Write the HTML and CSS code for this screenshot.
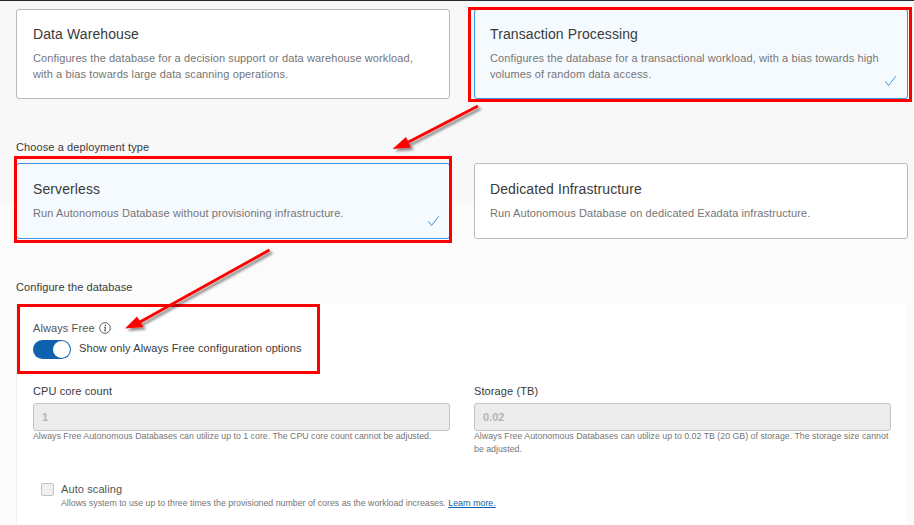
FILE: index.html
```html
<!DOCTYPE html>
<html lang="en">
<head>
<meta charset="utf-8">
<title>Create Autonomous Database</title>
<link rel="stylesheet" href="styles.css">
</head>
<body>
<main class="page">
  <div class="cards cards-top">
    <div class="card">
      <h3 class="card-title">Data Warehouse</h3>
      <p class="card-text">Configures the database for a decision support or data warehouse workload, with a bias towards large data scanning operations.</p>
    </div>
    <div class="card selected">
      <h3 class="card-title">Transaction Processing</h3>
      <p class="card-text">Configures the database for a transactional workload, with a bias towards high volumes of random data access.</p>
      <svg class="check" viewBox="0 0 11 10" width="11" height="10"><path d="M0.3 5.200 L3.600 9.400 L10.700 0.300" fill="none" stroke="#3d94e0" stroke-width="1"/></svg>
    </div>
  </div>

  <h2 class="section-label label-deploy">Choose a deployment type</h2>
  <div class="cards cards-deploy">
    <div class="card selected">
      <h3 class="card-title">Serverless</h3>
      <p class="card-text">Run Autonomous Database without provisioning infrastructure.</p>
      <svg class="check" viewBox="0 0 11 10" width="11" height="10"><path d="M0.3 5.200 L3.600 9.400 L10.700 0.300" fill="none" stroke="#3d94e0" stroke-width="1"/></svg>
    </div>
    <div class="card">
      <h3 class="card-title">Dedicated Infrastructure</h3>
      <p class="card-text">Run Autonomous Database on dedicated Exadata infrastructure.</p>
    </div>
  </div>

  <h2 class="section-label label-config">Configure the database</h2>
  <section class="panel">
    <div class="free-label">
      <span>Always Free</span>
      <svg class="info" viewBox="0 0 12 12" width="12" height="12"><circle cx="6" cy="6" r="5.300" fill="none" stroke="#555" stroke-width="0.9"/><circle cx="6.400" cy="3.400" r="0.7" fill="#444"/><path d="M5.200 5.300 H6.500 L5.700 8.800 H6.900" fill="none" stroke="#444" stroke-width="1"/></svg>
    </div>
    <div class="free-toggle">
      <span class="switch"><span class="knob"></span></span>
      <span class="switch-text">Show only Always Free configuration options</span>
    </div>
    <div class="fields">
      <div class="field">
        <label class="field-label">CPU core count</label>
        <div class="input">1</div>
        <p class="hint">Always Free Autonomous Databases can utilize up to 1 core. The CPU core count cannot be adjusted.</p>
      </div>
      <div class="field">
        <label class="field-label">Storage (TB)</label>
        <div class="input">0.02</div>
        <p class="hint">Always Free Autonomous Databases can utilize up to 0.02 TB (20 GB) of storage. The storage size cannot be adjusted.</p>
      </div>
    </div>
    <div class="autoscale">
      <span class="checkbox"></span>
      <div>
        <div class="auto-title">Auto scaling</div>
        <p class="auto-hint">Allows system to use up to three times the provisioned number of cores as the workload increases. <a href="#">Learn more.</a></p>
      </div>
    </div>
  </section>
</main>

<div class="redbox box-tp"></div>
<div class="redbox box-sl"></div>
<div class="redbox box-af"></div>

<svg class="arrows" width="914" height="525" viewBox="0 0 914 525">
  <defs>
    <filter id="shadow" x="-20%" y="-20%" width="140%" height="140%">
      <feDropShadow dx="2.500" dy="2.500" stdDeviation="1" flood-color="#000" flood-opacity="0.45"/>
    </filter>
  </defs>
  <g filter="url(#shadow)">
    <path class="arrow-shaft" d="M478 106 L408.500 142"/>
    <path class="arrow-head" d="M392.500 149 L406 137 L411 147.500 Z"/>
    <path class="arrow-shaft" d="M269.500 250 L140 322"/>
    <path class="arrow-head" d="M125 328.500 L137 316.500 L143.500 327 Z"/>
  </g>
</svg>
</body>
</html>
```

FILE: styles.css
```css
* { box-sizing: border-box; }
html, body { margin: 0; padding: 0; }
body {
  width: 914px;
  height: 525px;
  overflow: hidden;
  position: relative;
  background: #f9f9f9;
  font-family: "Liberation Sans", Arial, sans-serif;
  color: #333;
}
.page {
  height: 525px;
  border-top: 1px solid #252b33;
  padding: 8px 6px 0 16px;
  overflow: hidden;
  background: linear-gradient(#f8f8f8 202px, #fbfbfb 202px);
}
.cards {
  display: grid;
  grid-template-columns: 434px 434px;
  column-gap: 24px;
}
.cards-top { height: 90px; }
.cards-deploy { height: 76px; }
.cards-top .card { padding-top: 15px; }
.card {
  position: relative;
  background: #fff;
  border: 1px solid #b9b9bd;
  border-radius: 3px;
  padding: 16px 16px 0;
}
.card:nth-child(2) { padding-left: 15px; }
.card.selected {
  background: #f5faff;
  border-color: #3f92e2;
}
.card-title {
  margin: 0;
  font-size: 14px;
  line-height: 18px;
  font-weight: 400;
  color: #3a3a3a;
  letter-spacing: 0.1px;
}
.card-text {
  margin: 7px 0 0;
  font-size: 11px;
  line-height: 16px;
  color: #757575;
  letter-spacing: 0.1px;
}
.check {
  position: absolute;
  right: 11px;
  bottom: 12px;
}
.cards-deploy .check { right: 10px; }
.section-label {
  margin: 0;
  font-size: 11px;
  font-weight: 400;
  line-height: 14px;
  color: #3a3a3a;
  letter-spacing: 0.1px;
}
.label-deploy { margin-top: 41px; margin-bottom: 9px; }
.label-config { margin-top: 41px; margin-bottom: 10px; }
.panel {
  width: 891px;
  height: 240px;
  background: #fff;
  border-left: 1px solid #f3f3f3;
  padding: 16px 16px 0 16px;
}
.free-label {
  display: flex;
  align-items: center;
  gap: 4px;
  font-size: 11px;
  line-height: 16px;
  color: #555;
  letter-spacing: 0.1px;
}
.free-toggle {
  display: flex;
  align-items: center;
  gap: 8px;
  margin-top: 3px;
  height: 20px;
}
.switch {
  position: relative;
  display: block;
  width: 38px;
  height: 19px;
  border-radius: 10px;
  background: #0f62ae;
}
.knob {
  position: absolute;
  top: 1px;
  right: 1px;
  width: 17px;
  height: 17px;
  border-radius: 50%;
  background: #fff;
}
.switch-text {
  margin-top: -2px;
  font-size: 11px;
  color: #3a3a3a;
  letter-spacing: 0.1px;
}
.fields {
  display: grid;
  grid-template-columns: 417px 417px;
  column-gap: 24px;
  margin-top: 25px;
}
.field-label {
  display: block;
  font-size: 11px;
  line-height: 14px;
  color: #3a3a3a;
  letter-spacing: 0.1px;
}
.input {
  height: 28px;
  margin-top: 5px;
  border: 1px solid #c4c4c4;
  border-radius: 3px;
  background: #ececec;
  padding: 0 8px;
  font-size: 11px;
  line-height: 26px;
  font-weight: 700;
  color: #b5b5b5;
}
.hint {
  margin: -1px 0 0;
  font-size: 8.800px;
  line-height: 13px;
  color: #757575;
}
.autoscale {
  display: flex;
  gap: 7px;
  margin-left: 8px;
  margin-top: 27px;
}
.checkbox {
  display: block;
  width: 13px;
  height: 13px;
  border: 1px solid #c4c4c4;
  border-radius: 2px;
  background: #efefef;
}
.auto-title {
  font-size: 11px;
  line-height: 13px;
  color: #555;
  letter-spacing: 0.1px;
}
.auto-hint {
  margin: 1px 0 0;
  font-size: 8.800px;
  line-height: 13px;
  color: #757575;
}
.auto-hint a { color: #0a5ea8; }
.redbox {
  position: absolute;
  border: 3px solid #f00;
  pointer-events: none;
}
.box-tp { left: 468px; top: 7px; width: 444px; height: 95px; }
.box-sl { left: 14px; top: 156px; width: 438px; height: 87px; }
.box-af { left: 17px; top: 304px; width: 303px; height: 70px; }
.arrows { position: absolute; left: 0; top: 0; pointer-events: none; }
.arrow-shaft { fill: none; stroke: #f00; stroke-width: 3; }
.arrow-head { fill: #f00; }
```
